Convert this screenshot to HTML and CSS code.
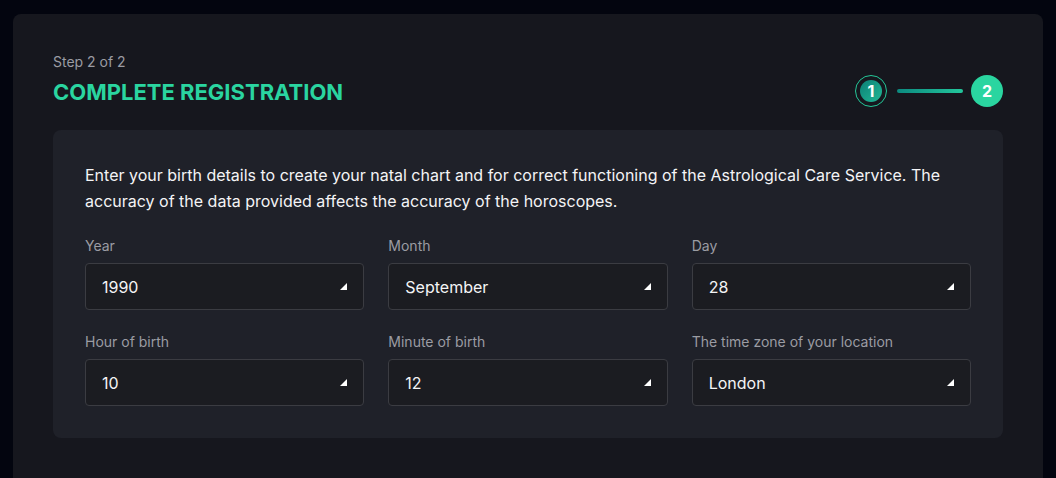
FILE: index.html
```html
<!DOCTYPE html>
<html lang="en">
<head>
  <meta charset="UTF-8">
  <meta name="viewport" content="width=device-width, initial-scale=1.0">
  <title>Complete Registration</title>
  <link rel="stylesheet" href="styles.css">
</head>
<body>
<div class="card">
  <div class="header">
    <div>
      <div class="step-label">Step 2 of 2</div>
      <h1 class="title">COMPLETE REGISTRATION</h1>
    </div>
    <div class="stepper">
      <div class="step done"><span>1</span></div>
      <div class="step-line"></div>
      <div class="step active">2</div>
    </div>
  </div>

  <div class="panel">
    <p class="intro">Enter your birth details to create your natal chart and for correct functioning of the Astrological Care Service. The accuracy of the data provided affects the accuracy of the horoscopes.</p>

    <form class="fields">
      <div class="field">
        <label>Year</label>
        <div class="select">1990</div>
      </div>
      <div class="field">
        <label>Month</label>
        <div class="select">September</div>
      </div>
      <div class="field">
        <label>Day</label>
        <div class="select">28</div>
      </div>
      <div class="field">
        <label>Hour of birth</label>
        <div class="select">10</div>
      </div>
      <div class="field">
        <label>Minute of birth</label>
        <div class="select">12</div>
      </div>
      <div class="field">
        <label>The time zone of your location</label>
        <div class="select">London</div>
      </div>
    </form>
  </div>
</div>
</body>
</html>
```

FILE: styles.css
```css
body {
  margin: 0;
  background-color: #03050f;
  font-family: Inter, "Noto Sans", sans-serif;
  color: #f2f2f4;
}

.card {
  margin: 14px 13px 0 13px;
  min-height: calc(100vh - 14px);
  background-color: #16171e;
  border-radius: 8px 8px 0 0;
  padding: 40px;
  box-sizing: border-box;
}

.header {
  display: flex;
  justify-content: space-between;
  align-items: flex-end;
}

.step-label {
  font-size: 14px;
  line-height: 16px;
  color: #9b9ca3;
}

.title {
  margin: 8px 0 0 0;
  font-size: 22px;
  line-height: 28px;
  font-weight: 700;
  color: #2ad5a0;
}

.stepper {
  display: flex;
  align-items: center;
  margin-bottom: -1px;
}

.step {
  width: 32px;
  height: 32px;
  border-radius: 50%;
  box-sizing: border-box;
  display: flex;
  align-items: center;
  justify-content: center;
  font-size: 16px;
  font-weight: 700;
  color: #ffffff;
}

.step.done {
  border: 1px solid #24c697;
}

.step.done span {
  width: 22px;
  height: 22px;
  border-radius: 50%;
  background: linear-gradient(135deg, #0c7f76, #22b895);
  display: flex;
  align-items: center;
  justify-content: center;
}

.step.active {
  background-color: #2ad5a0;
}

.step-line {
  width: 66px;
  height: 4px;
  border-radius: 2px;
  margin: 0 8px 0 10px;
  background: linear-gradient(90deg, #0c8a80, #23c69c);
}

.panel {
  margin-top: 24px;
  background-color: #1f2129;
  border-radius: 8px;
  padding: 32px;
}

.intro {
  margin: 0;
  font-size: 16px;
  line-height: 26px;
  color: #f4f4f6;
}

.fields {
  margin-top: 23px;
  display: grid;
  grid-template-columns: 1fr 1fr 1fr;
  column-gap: 24px;
  row-gap: 23px;
}

.field label {
  display: block;
  font-size: 14px;
  line-height: 18px;
  color: #9b9ca3;
  margin-bottom: 8px;
}

.select {
  position: relative;
  height: 47px;
  box-sizing: border-box;
  border: 1px solid #3b3c42;
  border-radius: 4px;
  background-color: #1b1c21;
  padding: 0 16px;
  display: flex;
  align-items: center;
  font-size: 16px;
  color: #f4f4f6;
}

.select::after {
  content: "";
  position: absolute;
  right: 16px;
  top: 19px;
  width: 0;
  height: 0;
  border-left: 7px solid transparent;
  border-bottom: 7px solid #ffffff;
}
```
